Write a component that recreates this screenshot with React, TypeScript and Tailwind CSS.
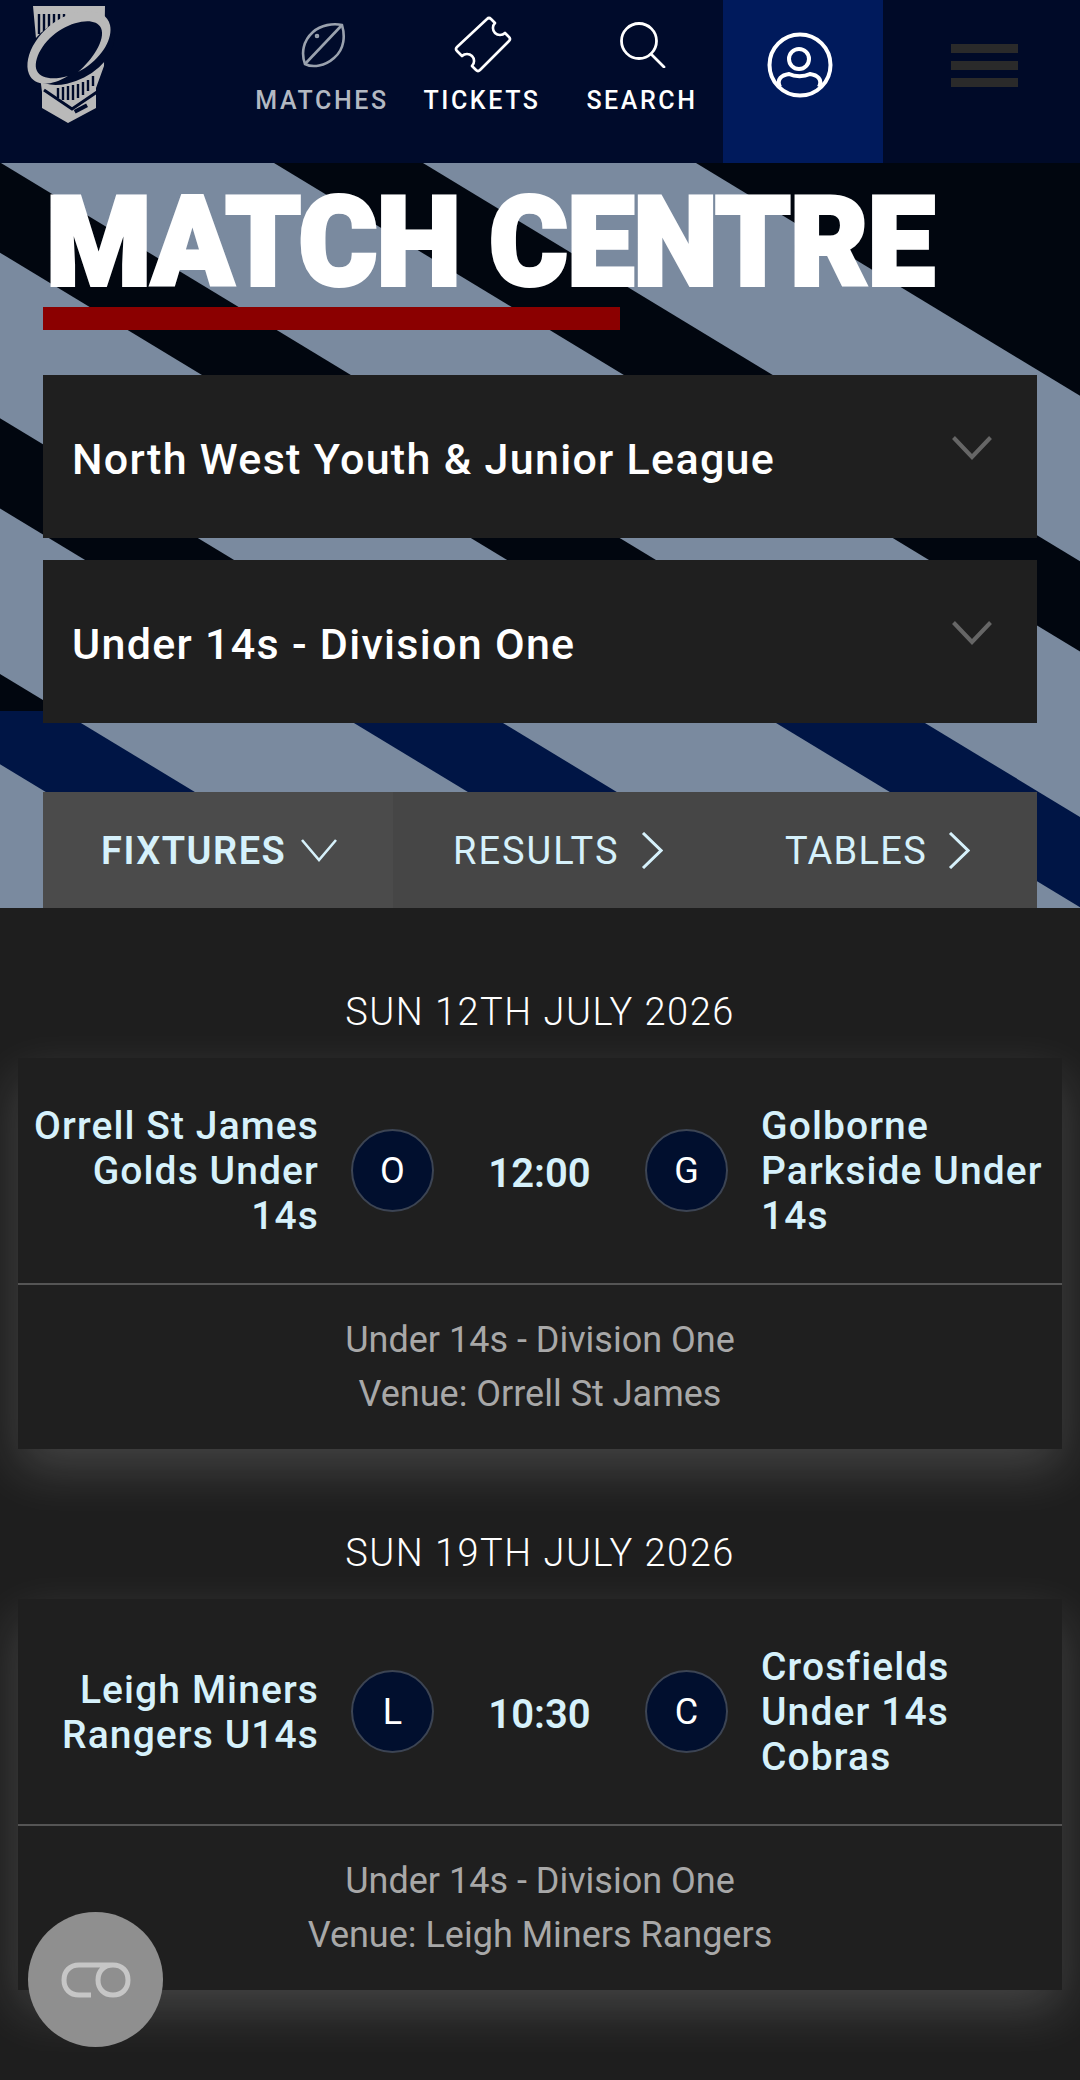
import React from 'react';

const HERO_BANDS = [-5, -4, -3, -2, -1, 0];

/** Diagonal stripes behind the hero, edges measured off the screenshot */
const HeroStripes: React.FC = () => {
  const shift = 1.65 * 745;
  return (
    <svg className="absolute inset-0 w-full h-full" viewBox="0 0 1080 745">
      <defs>
        <linearGradient id="bandFill" gradientUnits="userSpaceOnUse" x1="0" y1="0" x2="0" y2="745">
          <stop offset="0.735" stopColor="#01060f" />
          <stop offset="0.735" stopColor="#001545" />
        </linearGradient>
      </defs>
      <rect width="1080" height="745" fill="#7a8a9f" />
      {HERO_BANDS.map((k) => {
        const left = 274 + 422 * k;
        const right = 423 + 422 * k;
        return (
          <polygon
            key={k}
            points={`${left},0 ${right},0 ${right + shift},745 ${left + shift},745`}
            fill="url(#bandFill)"
          />
        );
      })}
      {/* top right corner is all dark */}
      <polygon points={`696,0 3000,0 3000,745 ${696 + shift},745`} fill="#01060f" />
    </svg>
  );
};

const Logo: React.FC = () => (
  <svg width="130" height="130" viewBox="0 0 130 130" className="shrink-0">
    <polygon points="33,6 105,6 104,66 96,88 96,108 68,123 42,108 42,92 38,60" fill="#b9b9b9" />
    <g stroke="#000b2b" strokeWidth="2.4">
      <path d="M39 14V34M44 14V31M49 14V28M54 14V25M59 14V22M64 14V19" />
      <path d="M58 88V98M63 87V100M68 86V100M73 85V100M78 84V98M83 82V95M88 80V91M93 76V86" />
    </g>
    <polyline points="44,90 72,109 97,92" fill="none" stroke="#000b2b" strokeWidth="3" />
    <rect x="74" y="107" width="14" height="4" fill="#000b2b" transform="rotate(-28 80 109)" />
    <ellipse cx="70" cy="50" rx="47" ry="31" transform="rotate(-27 70 50)" fill="#000b2b" />
    <path d="M29 74C22 56 40 26 68 15C88 7 107 11 110 25C113 38 103 56 85 68C83 69 80 71 78 72C92 60 106 40 101 28C96 18 78 20 62 29C44 39 32 60 37 71C41 79 54 80 68 76C50 87 34 86 29 74Z" fill="#b9b9b9" />
  </svg>
);

const BallIcon: React.FC = () => (
  <svg width="46" height="46" viewBox="0 0 46 46" fill="none" stroke="#9aa2ae" strokeWidth="2.6">
    <path d="M42 3C45 13 45 27 34 36C25 44 13 46 5 42C1 31 3 19 13 10C21 3 33 1 42 3Z" />
    <path d="M5 42L42 3" />
    <circle cx="17" cy="14" r="1" />
  </svg>
);

const TicketIcon: React.FC = () => (
  <svg width="58" height="58" viewBox="0 0 58 58" fill="none" stroke="#fff" strokeWidth="2.6" strokeLinejoin="round">
    <path d="M33 3Q35 1 37 3L41 7A6 6 0 0 0 51 17L55 21Q57 23 55 25L26 54Q24 56 22 54L18 50A6 6 0 0 0 8 40L3 35Q1 33 3 31Z" />
  </svg>
);

const SearchIcon: React.FC = () => (
  <svg width="46" height="46" viewBox="0 0 46 46" fill="none" stroke="#fff" strokeWidth="2.8" strokeLinecap="round">
    <circle cx="19" cy="19" r="17.5" />
    <path d="M31 32L44 45" />
  </svg>
);

const ProfileIcon: React.FC = () => (
  <svg width="66" height="66" viewBox="0 0 66 66" fill="none" stroke="#fff" strokeWidth="4">
    <circle cx="33" cy="33" r="30.5" />
    <circle cx="32" cy="27" r="10" />
    <path d="M13 55C9 47 15 43 22 42C28 45 37 45 43 42C50 43 56 47 52 55" />
  </svg>
);

const SelectChevron: React.FC = () => (
  <svg width="40" height="24" viewBox="0 0 40 24" fill="none" stroke="#666666" strokeWidth="4">
    <path d="M1.5 1.5L20 21L38.5 1.5" />
  </svg>
);

const TabArrow: React.FC = () => (
  <svg width="22" height="37" viewBox="0 0 22 37" fill="none" stroke="#d6f1fb" strokeWidth="3">
    <path d="M2 1L20 18.5L2 36" />
  </svg>
);

const NavItem: React.FC<{ label: string; dim?: boolean; children: React.ReactNode }> = ({ label, dim, children }) => (
  <div className="w-[160px] h-full flex flex-col items-center">
    <div className="h-[84px] flex items-center justify-center pt-[6px]">{children}</div>
    <div className={`mt-[2px] pr-[2px] text-[25px] leading-[30px] font-medium tracking-[2.6px] ${dim ? 'text-[#b3b9c2]' : 'text-white'}`}>
      {label}
    </div>
  </div>
);

const LeagueSelect: React.FC<{ label: string }> = ({ label }) => (
  <div className="h-[163px] bg-[#1f1f1f] flex items-center justify-between pl-[29px] pr-[45px]">
    <span className="text-[43px] font-medium text-white mt-[5px] tracking-[1.3px]">{label}</span>
    <span className="-mt-[18px] flex">
      <SelectChevron />
    </span>
  </div>
);

const Tabs: React.FC = () => (
  <div className="h-[116px] flex bg-[#464646] text-[#d6f1fb] text-[38px]">
    <div className="w-[350px] bg-[#4b4b4b] flex items-center pl-[58px] gap-[15px]">
      <span className="pt-[2px] font-semibold tracking-[1.5px]">FIXTURES</span>
      <svg width="36" height="24" viewBox="0 0 36 24" fill="none" stroke="#d6f1fb" strokeWidth="2.6">
        <path d="M1 2L18 22L35 2" />
      </svg>
    </div>
    <div className="w-[332px] flex items-center pl-[60px] gap-[21px]">
      <span className="pt-[2px] tracking-[2px]">RESULTS</span>
      <TabArrow />
    </div>
    <div className="flex-1 flex items-center pl-[60px] gap-[21px]">
      <span className="pt-[2px] tracking-[1.3px]">TABLES</span>
      <TabArrow />
    </div>
  </div>
);

type Fixture = {
  date: string;
  home: string;
  away: string;
  time: string;
  division: string;
  venue: string;
};

const fixtures: Fixture[] = [
  {
    date: 'SUN 12TH JULY 2026',
    home: 'Orrell St James Golds Under 14s',
    away: 'Golborne Parkside Under 14s',
    time: '12:00',
    division: 'Under 14s - Division One',
    venue: 'Venue: Orrell St James',
  },
  {
    date: 'SUN 19TH JULY 2026',
    home: 'Leigh Miners Rangers U14s',
    away: 'Crosfields Under 14s Cobras',
    time: '10:30',
    division: 'Under 14s - Division One',
    venue: 'Venue: Leigh Miners Rangers',
  },
];

const TeamBadge: React.FC<{ letter: string }> = ({ letter }) => (
  <div className="w-[83px] h-[83px] shrink-0 rounded-full bg-[#010f2e] border-2 border-[#3c4453] flex items-center justify-center text-[36px] text-white">
    {letter}
  </div>
);

const FixtureCard: React.FC<{ fixture: Fixture }> = ({ fixture }) => (
  <div>
    <div className="h-[150px] pt-[58px] flex items-center justify-center text-[38px] font-light text-white tracking-[1.5px]">
      {fixture.date}
    </div>
    <div className="mx-[18px] h-[391px] bg-[#1f1f1f] shadow-[0_20px_48px_rgba(255,255,255,0.17)]">
      <div className="h-[225px] flex items-center text-[#d6f1fb]">
        <div className="w-[301px] pl-[6px] pt-[2px] text-right text-[39px] leading-[45px] font-medium tracking-[1.1px]">{fixture.home}</div>
        <div className="ml-[32px]">
          <TeamBadge letter={fixture.home[0]} />
        </div>
        <div className="w-[211px] pt-[6px] text-center text-[40px] font-semibold">{fixture.time}</div>
        <TeamBadge letter={fixture.away[0]} />
        <div className="ml-[33px] w-[290px] pt-[2px] text-[39px] leading-[45px] font-medium tracking-[1.1px]">{fixture.away}</div>
      </div>
      <div className="h-[2px] bg-[#555555]" />
      <div className="h-[164px] flex flex-col items-center justify-center text-[36px] leading-[54px] text-[#a8a8a8]">
        <div>{fixture.division}</div>
        <div>{fixture.venue}</div>
      </div>
    </div>
  </div>
);

const App: React.FC = () => {
  return (
    <div className="relative h-[2080px] w-[1080px] overflow-hidden bg-[#1e1e1e] font-['Roboto',sans-serif]">
      {/* Header */}
      <div className="h-[163px] flex bg-[#000b2b]">
        <div className="w-[243px]">
          <Logo />
        </div>
        <NavItem label="MATCHES" dim>
          <BallIcon />
        </NavItem>
        <NavItem label="TICKETS">
          <TicketIcon />
        </NavItem>
        <NavItem label="SEARCH">
          <SearchIcon />
        </NavItem>
        <div className="w-[160px] bg-[#001a5c] flex justify-center pt-[32px] pr-[6px]">
          <ProfileIcon />
        </div>
        <div className="flex-1 pl-[68px] pt-[44px] flex flex-col gap-[8px] bg-[#000a28]">
          <div className="w-[67px] h-[9px] bg-[#2a2a2a]" />
          <div className="w-[67px] h-[9px] bg-[#2a2a2a]" />
          <div className="w-[67px] h-[9px] bg-[#2a2a2a]" />
        </div>
      </div>

      {/* Hero */}
      <div className="relative h-[745px] px-[43px]">
        <HeroStripes />
        <div className="relative">
          <h1 className="h-[144px] pt-[22px] pl-[3px] text-[125px] leading-[115px] font-black text-white whitespace-nowrap origin-left scale-x-[0.962] tracking-[-1px] [-webkit-text-stroke:4px_white]">
            MATCH CENTRE
          </h1>
          <div className="w-[577px] h-[23px] bg-[#8b0000] mb-[45px]" />
          <div className="flex flex-col gap-[22px]">
            <LeagueSelect label="North West Youth & Junior League" />
            <LeagueSelect label="Under 14s - Division One" />
          </div>
          <div className="mt-[69px]">
            <Tabs />
          </div>
        </div>
      </div>

      {/* Fixtures */}
      {fixtures.map((f) => (
        <FixtureCard key={f.date} fixture={f} />
      ))}
      <div className="relative mx-[18px] mt-[68px] h-[40px] bg-[#1e1e1e]" />

      {/* Floating cookie button */}
      <div className="absolute left-[28px] top-[1912px] w-[135px] h-[135px] rounded-full bg-[#8f8f8f] flex items-center justify-center">
        <svg width="70" height="36" viewBox="0 0 70 36" fill="none" stroke="#c6c6c6" strokeWidth="5">
          <path d="M30 3H18C9 3 3 9 3 18C3 27 9 33 18 33H30" />
          <path d="M30 3H52C61 3 67 9 67 18C67 27 61 33 52 33C43 33 37 27 37 18C37 9 43 3 52 3" />
        </svg>
      </div>
    </div>
  );
};

export default App;
